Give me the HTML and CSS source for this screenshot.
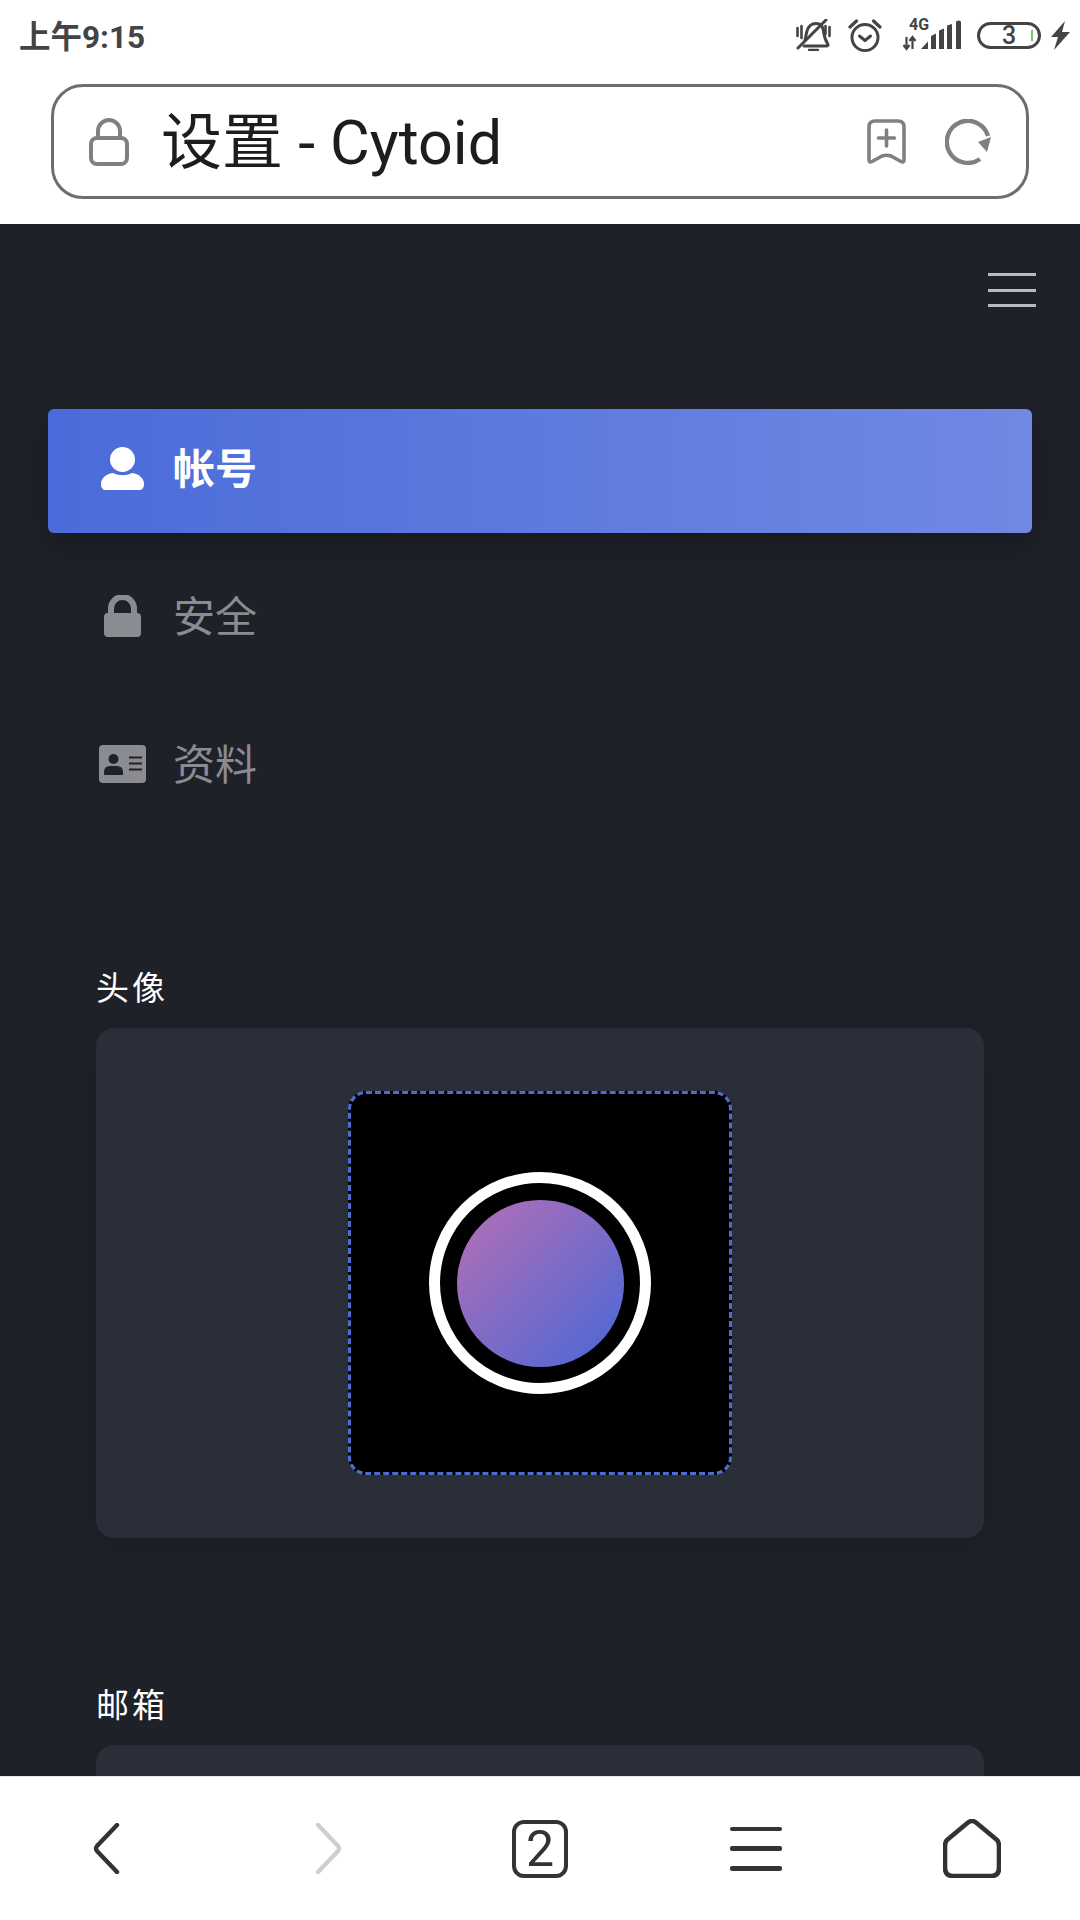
FILE: index.html
```html
<!DOCTYPE html>
<html lang="zh-CN">
<head>
  <meta charset="UTF-8">
  <title>设置 - Cytoid</title>
  <link rel="stylesheet" href="styles.css">
</head>
<body>
  <header class="browser-top">
    <div class="status-bar">
      <span class="clock">上午9:15</span>
      <div class="status-icons">
        <svg class="ic-bell" viewBox="0 0 36 32" fill="none" stroke="#444" stroke-width="3" stroke-linecap="round" stroke-linejoin="round">
          <path d="M9 21c1-3 1-6 2-9 1.500-5 5-7.500 9-7.500 4.500 0 7 3 7.500 7.500.5 4 1 8 4.500 13.500.3 1-.5 1.500-1.500 1.500H8"/>
          <path d="M30 1 2 29"/>
          <path d="M13 31h9" stroke-width="2.400"/>
          <path d="M1.500 9v8M5.500 7v12M29.500 7v8M33.500 8v9" stroke-width="2.600"/>
        </svg>
        <svg class="ic-alarm" viewBox="0 0 34 33" fill="none" stroke="#444" stroke-width="3" stroke-linecap="round" stroke-linejoin="round">
          <circle cx="17" cy="18.500" r="13"/>
          <path d="M11.500 17 17 21.500l5.500-4.500"/>
          <path d="M2 8 8.500 2M32 8 25.500 2" stroke-width="3.200"/>
        </svg>
        <svg class="ic-net" viewBox="0 -8 58 48">
          <text class="net-label" x="6" y="11">4G</text>
          <path d="M3.500 18v12M0.500 26 3.500 30 6.500 26" fill="none" stroke="#444" stroke-width="2.200"/>
          <path d="M9.500 30V18M6.500 22 9.500 18l3 4" fill="none" stroke="#444" stroke-width="2.200"/>
          <path d="M18 30l7-7.500V30zM28 30V17l5-2.500V30zM36 30V11.500l5-2V30zM44 30V6.500l5-1.500V30zM53 30V3q0-1.500 2.500-1.500T58 3V30z" fill="#444"/>
        </svg>
        <div class="battery">3</div>
        <svg class="ic-bolt" viewBox="0 0 19 29"><path d="M14 0 0 16h7L3 29 19 11h-8z" fill="#444"/></svg>
      </div>
    </div>
    <div class="url-bar">
      <svg class="url-lock" viewBox="0 0 40 48" fill="none" stroke="#808080" stroke-width="4">
        <rect x="2" y="20" width="36" height="26" rx="6"/>
        <path d="M9 20v-7a11 11 0 0 1 22 0v7"/>
      </svg>
      <span class="url-title">设置 - Cytoid</span>
      <svg class="url-bookmark" viewBox="0 0 39 45" fill="none" stroke="#808080" stroke-width="3.600" stroke-linejoin="round" stroke-linecap="round">
        <path d="M2 8q0-6 6-6h23q6 0 6 6v33q0 3-3 1.500l-10-5.500q-4.500-1.500-9 0L5 42.500Q2 44 2 41z"/>
        <path d="M19.500 11v16M11.500 19h16"/>
      </svg>
      <svg class="url-reload" viewBox="0 0 46 46" fill="none">
        <path d="M35 40A21 21 0 1 1 43 17" stroke="#808080" stroke-width="4.400"/>
        <path d="M33 23 46 18l-4 15z" fill="#808080"/>
      </svg>
    </div>
  </header>

  <main class="page">
    <div class="page-top">
      <button class="burger"><span></span><span></span><span></span></button>
    </div>

    <nav class="tabs">
      <a class="tab tab-active">
        <span class="tab-icon">
          <svg width="43" height="43" viewBox="0 0 43 43" fill="#fff">
            <circle cx="21.500" cy="12.500" r="12.500"/>
            <path d="M0 37c0-6 5-10 12-11 6 3 13 3 19 0 7 1 12 5 12 11 0 4-2 6-5 6H5c-3 0-5-2-5-6z"/>
          </svg>
        </span>
        <span class="tab-text">帐号</span>
      </a>
      <a class="tab">
        <span class="tab-icon">
          <svg width="37" height="42" viewBox="0 0 37 42">
            <path d="M7 20v-6.500a11.500 11.500 0 0 1 23 0V20" fill="none" stroke="#8a8c91" stroke-width="6"/>
            <rect y="18" width="37" height="24" rx="4" fill="#8a8c91"/>
          </svg>
        </span>
        <span class="tab-text">安全</span>
      </a>
      <a class="tab">
        <span class="tab-icon">
          <svg width="47" height="38" viewBox="0 0 47 38">
            <rect width="47" height="38" rx="4" fill="#8a8c91"/>
            <circle cx="14.500" cy="14" r="5" fill="#1f2129"/>
            <path d="M5 30v-3q0-6 6-6h7q6 0 6 6v3z" fill="#1f2129"/>
            <path d="M30 12.500h13M30 18.500h13M30 24.500h13" stroke="#1f2129" stroke-width="2"/>
          </svg>
        </span>
        <span class="tab-text">资料</span>
      </a>
    </nav>

    <section class="field field-avatar">
      <h3 class="field-label">头像</h3>
      <div class="card card-avatar">
        <div class="dropzone">
          <div class="avatar-ring">
            <div class="avatar"></div>
          </div>
        </div>
      </div>
    </section>

    <section class="field field-email">
      <h3 class="field-label">邮箱</h3>
      <div class="card card-email"></div>
    </section>
  </main>

  <footer class="browser-nav">
    <div class="nav-slot nav-back">
      <svg width="27" height="51" viewBox="0 0 27 51" fill="none" stroke="#333" stroke-width="4.400" stroke-linecap="round" stroke-linejoin="round">
        <path d="M24 2 4 23q-2 2.500 0 5L24 49"/>
      </svg>
    </div>
    <div class="nav-slot nav-forward">
      <svg width="27" height="51" viewBox="0 0 27 51" fill="none" stroke="#cfcfcf" stroke-width="4.400" stroke-linecap="round" stroke-linejoin="round">
        <path d="M3 2l20 21q2 2.500 0 5L3 49"/>
      </svg>
    </div>
    <div class="nav-slot">
      <span class="tab-count">2</span>
    </div>
    <div class="nav-slot">
      <span class="nav-menu"><i></i><i></i><i></i></span>
    </div>
    <div class="nav-slot">
      <svg width="58" height="59" viewBox="0 0 58 59" fill="none" stroke="#333" stroke-width="4.600" stroke-linejoin="round">
        <path d="M25 3.500q4-3 8 0L54 21q2 2 2 6v22q0 8-8 8H10q-8 0-8-8V27q0-4 2-6z"/>
      </svg>
    </div>
  </footer>
</body>
</html>
```

FILE: styles.css
```css
* {
  box-sizing: border-box;
}
html, body {
  margin: 0;
  padding: 0;
}
body {
  width: 1080px;
  height: 1920px;
  display: flex;
  flex-direction: column;
  overflow: hidden;
  background: #fff;
  font-family: Roboto, "Noto Sans CJK SC", sans-serif;
}

/* browser chrome, top */
.browser-top {
  height: 224px;
  background: #fff;
  flex-shrink: 0;
}
.status-bar {
  height: 84px;
  padding: 0 10px 0 19px;
  display: flex;
  align-items: center;
  justify-content: space-between;
}
.clock {
  font-size: 31.500px;
  font-weight: 700;
  color: #444;
  margin-top: -16px;
}
.status-icons {
  display: flex;
  align-items: center;
  margin-top: -14px;
}
.ic-bell { width: 36px; height: 32px; }
.ic-alarm { width: 34px; height: 33px; margin-left: 16px; }
.ic-net { width: 58px; height: 48px; margin-left: 21px; }
.ic-bolt { width: 19px; height: 29px; margin-left: 10px; }
.net-label {
  font-size: 16px;
  font-weight: 700;
  fill: #444;
}
.battery {
  position: relative;
  width: 64px;
  height: 27px;
  margin-left: 16px;
  border: 3px solid #444;
  border-radius: 14px;
  display: flex;
  align-items: center;
  justify-content: center;
  font-size: 25px;
  font-weight: 500;
  line-height: 21px;
  color: #444;
}
.battery::after {
  content: "";
  position: absolute;
  right: 5px;
  top: 5px;
  width: 2px;
  height: 11px;
  background: #7ac46a;
}
.url-bar {
  height: 115px;
  margin: 0 51px;
  border: 3px solid #6e6e6e;
  border-radius: 32px;
  display: flex;
  align-items: center;
  padding: 0 35px 0 35px;
}
.url-lock { width: 40px; height: 48px; }
.url-title {
  font-size: 61px;
  color: #1d1d1d;
  margin: -8px 0 0 32px;
  flex: 1;
  white-space: nowrap;
}
.url-bookmark { width: 39px; height: 45px; }
.url-reload { width: 46px; height: 46px; margin-left: 39px; }

/* page content */
.page {
  flex: 1;
  min-height: 0;
  overflow: hidden;
  background: #1f2129;
}
.page-top {
  padding: 49px 44px 0 0;
  display: flex;
  justify-content: flex-end;
}
.burger {
  width: 48px;
  height: 34px;
  padding: 0;
  border: none;
  background: none;
  display: flex;
  flex-direction: column;
  justify-content: space-between;
}
.burger span {
  display: block;
  height: 3px;
  background: #b9bbc0;
}
.tabs {
  margin: 102px 48px 0;
  display: flex;
  flex-direction: column;
  gap: 24px;
}
.tab {
  height: 124px;
  padding: 0 0 6px 51px;
  display: flex;
  align-items: center;
  font-size: 42px;
  color: #8a8c91;
  border-radius: 6px;
}
.tab-text {
  padding-bottom: 6px;
}
.tab-active {
  color: #fff;
  font-weight: 700;
  background: linear-gradient(90deg, #4a6bd9, #7089e3);
  box-shadow: 0 12px 30px rgba(0, 0, 0, 0.25);
}
.tab-icon {
  width: 47px;
  margin-right: 27px;
  display: flex;
  justify-content: center;
  align-items: center;
}
.field {
  padding: 0 96px;
}
.field-avatar {
  margin-top: 140px;
}
.field-email {
  margin-top: 148px;
}
.field-label {
  margin: 0 0 19px;
  font-size: 33px;
  font-weight: 400;
  line-height: 40px;
  letter-spacing: 3px;
  color: #fff;
}
.card {
  background: #2a2e39;
  border-radius: 18px;
  box-shadow: 0 10px 30px rgba(0, 0, 0, 0.12);
}
.card-avatar {
  height: 510px;
  display: flex;
  align-items: center;
  justify-content: center;
}
.card-email {
  height: 120px;
}
.dropzone {
  width: 384px;
  height: 384px;
  background: #000;
  border: 3px dashed #4f6bd0;
  border-radius: 18px;
  display: flex;
  align-items: center;
  justify-content: center;
}
.avatar-ring {
  width: 222px;
  height: 222px;
  border: 11px solid #fff;
  border-radius: 50%;
  display: flex;
  align-items: center;
  justify-content: center;
}
.avatar {
  width: 167px;
  height: 167px;
  border-radius: 50%;
  background: linear-gradient(135deg, #b66fb4, #4868d8);
}

/* browser chrome, bottom */
.browser-nav {
  height: 144px;
  flex-shrink: 0;
  background: #fff;
  border-top: 1px solid #e6e6e6;
  display: grid;
  grid-template-columns: repeat(5, 216px);
}
.nav-slot {
  display: flex;
  align-items: center;
  justify-content: center;
}
.nav-back {
  padding-right: 4px;
}
.nav-forward {
  padding-left: 8px;
}
.tab-count {
  width: 56px;
  height: 58px;
  border: 4.500px solid #333;
  border-radius: 12px;
  display: flex;
  align-items: center;
  justify-content: center;
  font-size: 50px;
  color: #333;
}
.nav-menu {
  width: 52px;
  height: 44px;
  display: flex;
  flex-direction: column;
  justify-content: space-between;
}
.nav-menu i {
  display: block;
  height: 4.500px;
  border-radius: 2px;
  background: #333;
}
```
